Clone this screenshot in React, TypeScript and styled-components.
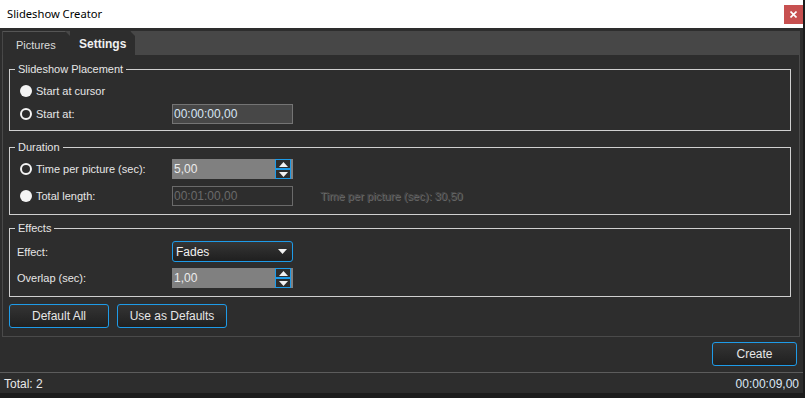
import React from "react";
import styled, { createGlobalStyle } from "styled-components";

const Global = createGlobalStyle`
  html, body { margin: 0; padding: 0; background: #1c1c1c; }
  body { font-family: "Liberation Sans", Arial, sans-serif; font-size: 11px; }
  * { box-sizing: border-box; }
`;

const Window = styled.div`
  width: 803px;
  height: 393px;
  display: flex;
  flex-direction: column;
  background: #2d2d2d;
  color: #e6e6e6;
`;

const TitleBar = styled.div`
  height: 28px;
  background: #ffffff;
  display: flex;
  align-items: center;
  justify-content: space-between;
  padding-left: 7px;
  padding-bottom: 2px;
`;

const Title = styled.span`
  font-family: "Noto Sans", "Open Sans", sans-serif;
  font-size: 11.2px;
  color: #000;
`;

const CloseBtn = styled.div`
  width: 19px;
  height: 19px;
  margin-top: 3px;
  background: #c75050;
  display: flex;
  align-items: center;
  justify-content: center;
`;

const TabControl = styled.div`
  margin: 3px 3px 0 2px;
  display: flex;
  flex-direction: column;
`;

const TabStrip = styled.div`
  height: 24px;
  background: #474747;
  display: flex;
  align-items: stretch;
`;

const Tab = styled.div<{ $active?: boolean }>`
  width: ${(p) => (p.$active ? 65 : 67)}px;
  margin-left: ${(p) => (p.$active ? 0 : 1)}px;
  background: #2d2d2d;
  clip-path: polygon(0 0, calc(100% - 5px) 0, 100% 5px, 100% 100%, 0 100%);
  display: flex;
  align-items: center;
  padding-left: ${(p) => (p.$active ? 9 : 13)}px;
  padding-top: ${(p) => (p.$active ? 0 : 3)}px;
  font-weight: ${(p) => (p.$active ? "bold" : "normal")};
  font-size: ${(p) => (p.$active ? 12 : 11)}px;
  color: ${(p) => (p.$active ? "#f0f0f0" : "#dcdcdc")};
  border-top: 1px solid ${(p) => (p.$active ? "#2d2d2d" : "#555")};
`;

const TabPage = styled.div`
  height: 282px;
  border: 1px solid #4a4a4a;
  border-top: none;
  padding: 8px 8px 8px 6px;
  display: flex;
  flex-direction: column;
`;

const Group = styled.fieldset<{ $mt: number; $pt: number; $pb: number; $gap: number }>`
  margin: ${(p) => p.$mt}px 0 0 0;
  padding: ${(p) => p.$pt}px 0 ${(p) => p.$pb}px 0;
  border: 1px solid #cfcfcf;
  display: flex;
  flex-direction: column;
  gap: ${(p) => p.$gap}px;
  min-width: 0;
`;

const Legend = styled.legend`
  margin-left: 5px;
  padding: 0 3px;
  line-height: 13px;
  font-size: 11px;
  color: #e6e6e6;
`;

const Row = styled.div<{ $h: number }>`
  height: ${(p) => p.$h}px;
  display: grid;
  grid-template-columns: 162px 121px auto;
  align-items: center;
`;

const LabelCell = styled.div<{ $pl: number }>`
  display: flex;
  align-items: center;
  padding-left: ${(p) => p.$pl}px;
  gap: 4px;
  white-space: nowrap;
  color: #e6e6e6;
`;

const Radio = styled.span<{ $checked?: boolean }>`
  width: 12px;
  height: 12px;
  border-radius: 50%;
  background: ${(p) => (p.$checked ? "#2d2d2d" : "#f4f4f4")};
  border: ${(p) => (p.$checked ? "2.5px solid #f4f4f4" : "none")};
  flex: none;
`;

const TextBox = styled.div<{ $disabled?: boolean }>`
  height: 20px;
  border: 1px solid ${(p) => (p.$disabled ? "#6a6a6a" : "#747474")};
  background: ${(p) => (p.$disabled ? "#2d2d2d" : "#474747")};
  color: ${(p) => (p.$disabled ? "#6a6a6a" : "#d8e6f4")};
  font-size: 12px;
  display: flex;
  align-items: center;
  padding-left: 1px;
`;

const Spin = styled.div`
  height: 20px;
  background: #808080;
  display: flex;
  align-items: stretch;
  justify-content: space-between;
  color: #ececec;
  font-size: 12px;
  padding: 0 2px 0 2px;
`;

const SpinValue = styled.span`
  display: flex;
  align-items: center;
`;

const SpinButtons = styled.div`
  width: 16px;
  display: flex;
  flex-direction: column;
`;

const SpinBtn = styled.div`
  flex: 1;
  border: 1px solid #1e9be8;
  background: #2d2d2d;
  display: flex;
  align-items: center;
  justify-content: center;
`;

const Combo = styled.div`
  height: 21px;
  border: 1px solid #1e9be8;
  border-radius: 3px;
  background: linear-gradient(#353535, #1f1f1f);
  display: flex;
  align-items: center;
  justify-content: space-between;
  padding: 0 5px 0 3px;
  font-size: 12px;
  color: #f0f0f0;
`;

const DisabledNote = styled.span`
  padding-left: 27px;
  font-size: 11.2px;
  color: #484848;
  text-shadow: 1px 1px 0 #6e6e6e;
  white-space: nowrap;
`;

const ButtonRow = styled.div`
  margin-top: 7px;
  display: flex;
  gap: 8px;
`;

const Button = styled.button<{ $w: number }>`
  width: ${(p) => p.$w}px;
  height: 24px;
  border: 1px solid #1e9be8;
  border-radius: 3px;
  background: linear-gradient(#343434, #202020);
  color: #e6e6e6;
  font-family: "Liberation Sans", Arial, sans-serif;
  font-size: 12px;
  padding: 0;
`;

const Footer = styled.div`
  height: 35px;
  display: flex;
  justify-content: flex-end;
  align-items: flex-start;
  padding: 5px 6px 0 0;
`;

const StatusBar = styled.div`
  flex: 1;
  border-top: 1px solid #5c5c5c;
  display: flex;
  justify-content: space-between;
  align-items: center;
  padding: 1px 4px 0 4px;
  font-size: 12px;
`;

const StatusLeft = styled.span`
  color: #e8e8e8;
`;

const StatusRight = styled.span`
  color: #dde8f6;
`;

const Up = () => (
  <svg width="9" height="5" viewBox="0 0 9 5"><path d="M4.5 0 L9 5 L0 5 Z" fill="#f2f2f2" /></svg>
);
const Down = () => (
  <svg width="9" height="5" viewBox="0 0 9 5"><path d="M0 0 L9 0 L4.5 5 Z" fill="#f2f2f2" /></svg>
);

const SpinBox = ({ value }: { value: string }) => (
  <Spin>
    <SpinValue>{value}</SpinValue>
    <SpinButtons>
      <SpinBtn><Up /></SpinBtn>
      <SpinBtn><Down /></SpinBtn>
    </SpinButtons>
  </Spin>
);

export default function App() {
  return (
    <>
      <Global />
      <Window>
        <TitleBar>
          <Title>Slideshow Creator</Title>
          <CloseBtn>
            <svg width="7" height="7" viewBox="0 0 7 7">
              <path d="M0.5 0.5 L6.5 6.5 M6.5 0.5 L0.5 6.5" stroke="#fff" strokeWidth="1.6" />
            </svg>
          </CloseBtn>
        </TitleBar>
        <TabControl>
          <TabStrip>
            <Tab>Pictures</Tab>
            <Tab $active>Settings</Tab>
          </TabStrip>
          <TabPage>
            <Group $mt={0} $pt={5} $pb={6} $gap={3}>
              <Legend>Slideshow Placement</Legend>
              <Row $h={20}>
                <LabelCell $pl={10}><Radio />Start at cursor</LabelCell>
              </Row>
              <Row $h={20}>
                <LabelCell $pl={10}><Radio $checked />Start at:</LabelCell>
                <TextBox>00:00:00,00</TextBox>
              </Row>
            </Group>
            <Group $mt={10} $pt={5} $pb={8} $gap={7}>
              <Legend>Duration</Legend>
              <Row $h={20}>
                <LabelCell $pl={10}><Radio $checked />Time per picture (sec):</LabelCell>
                <SpinBox value="5,00" />
              </Row>
              <Row $h={20}>
                <LabelCell $pl={10}><Radio />Total length:</LabelCell>
                <TextBox $disabled>00:01:00,00</TextBox>
                <DisabledNote>Time per picture (sec): 30,50</DisabledNote>
              </Row>
            </Group>
            <Group $mt={7} $pt={6} $pb={8} $gap={6}>
              <Legend>Effects</Legend>
              <Row $h={21}>
                <LabelCell $pl={7}>Effect:</LabelCell>
                <Combo>
                  <span>Fades</span>
                  <Down />
                </Combo>
              </Row>
              <Row $h={20}>
                <LabelCell $pl={7}>Overlap (sec):</LabelCell>
                <SpinBox value="1,00" />
              </Row>
            </Group>
            <ButtonRow>
              <Button $w={100}>Default All</Button>
              <Button $w={110}>Use as Defaults</Button>
            </ButtonRow>
          </TabPage>
        </TabControl>
        <Footer>
          <Button $w={85}>Create</Button>
        </Footer>
        <StatusBar>
          <StatusLeft>Total: 2</StatusLeft>
          <StatusRight>00:00:09,00</StatusRight>
        </StatusBar>
      </Window>
    </>
  );
}
